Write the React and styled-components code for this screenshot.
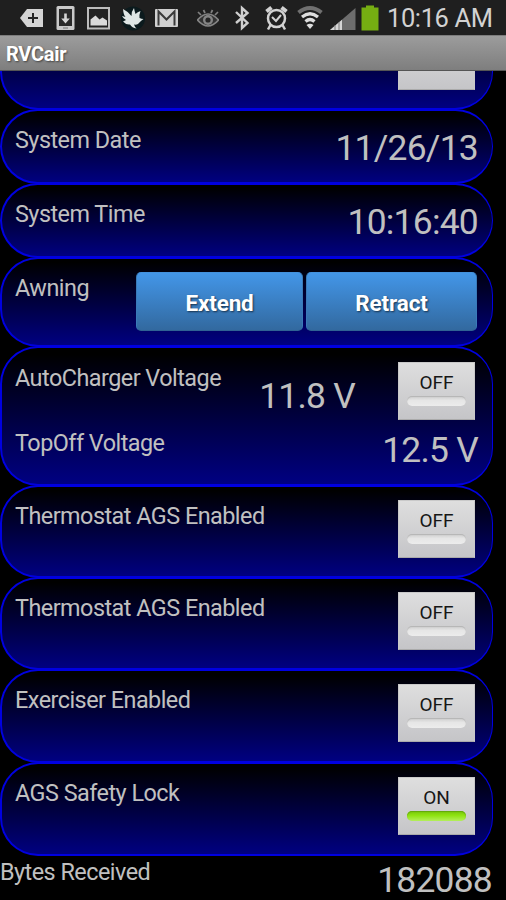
import React from "react";
import styled, { createGlobalStyle } from "styled-components";

const GlobalStyle = createGlobalStyle`
  * {
    box-sizing: border-box;
  }
  body {
    margin: 0;
    background: #000;
    font-family: Roboto, "Noto Sans", sans-serif;
  }
`;

const Screen = styled.div`
  display: flex;
  flex-direction: column;
  width: 506px;
  height: 900px;
  overflow: hidden;
  background: #000;
  color: #c0c0c0;
`;

const StatusBar = styled.header`
  display: flex;
  align-items: center;
  flex: none;
  height: 35px;
  padding-left: 20px;
  background: #1f1f1f;
`;

const StatusIcon = styled.svg`
  flex: none;
  display: block;
  width: ${(p) => p.$w}px;
  height: 35px;
  margin-right: ${(p) => p.$gap}px;
`;

const Clock = styled.span`
  font-size: 25.5px;
  line-height: 35px;
  letter-spacing: -0.4px;
  padding-top: 1px;
  color: #d2d2d2;
  white-space: nowrap;
`;

const TitleBar = styled.div`
  flex: none;
  height: 36px;
  padding-left: 6px;
  background: linear-gradient(#9c9c9c, #7e7e7e);
  border-top: 1px solid #7c7c7c;
  border-bottom: 1px solid #555;
  color: #fff;
  font-size: 20px;
  font-weight: 700;
  line-height: 36px;
  letter-spacing: -0.3px;
  text-shadow: 1px 1px 2px rgba(0, 0, 0, 0.5);
`;

const ScrollArea = styled.main`
  flex: 1;
  min-height: 0;
  overflow: hidden;
`;

const List = styled.div`
  margin-top: -54px;
`;

const Card = styled.section`
  width: 493px;
  height: ${(p) => p.$height}px;
  margin-bottom: -1px;
  padding: 0 13px;
  border: 2px solid #0000e0;
  border-right-width: 1px;
  border-radius: 38px;
  background: linear-gradient(#000 6%, #000084) border-box;
`;

const Row = styled.div`
  display: flex;
  align-items: flex-start;
  justify-content: flex-end;
  height: ${(p) => p.$height || "auto"};
`;

const Label = styled.span`
  flex: 1;
  padding-top: ${(p) => p.$top ?? 15}px;
  font-size: 23.4px;
  line-height: 28px;
  letter-spacing: -0.52px;
  white-space: nowrap;
`;

const Value = styled.span`
  padding-top: ${(p) => p.$top ?? 16}px;
  margin-right: ${(p) => p.$right ?? 1}px;
  font-size: 35.4px;
  line-height: 42px;
  letter-spacing: -0.75px;
  white-space: nowrap;
`;

const ToggleButton = styled.button`
  display: flex;
  flex-direction: column;
  align-items: center;
  flex: none;
  width: 77px;
  height: 58px;
  margin: ${(p) => p.$top ?? 13}px 4px 0 0;
  padding: 9px 0 0;
  border: 1px solid #c9c9c9;
  border-bottom-color: #aaa;
  background: linear-gradient(#dedede, #c5c5c8);
  color: #161616;
  font-family: inherit;
  font-size: 19px;
  line-height: 22px;
`;

const Indicator = styled.span`
  width: 59px;
  height: 10px;
  margin-top: 2px;
  border-radius: 5px;
  background: ${(p) =>
    p.$on
      ? "linear-gradient(#78c60c, #8fe312 45%, #b4ee5c)"
      : "linear-gradient(#cdcdcd, #e6e6e6 45%, #ececec)"};
  box-shadow: inset 0 1px 1px ${(p) => (p.$on ? "#62a80a" : "#b4b4b4")};
`;

const ActionButton = styled.button`
  width: ${(p) => p.$width}px;
  height: 59px;
  margin: 13px 0 0 3px;
  padding: 3px 0 0;
  border: 1px solid #3a7ab8;
  border-top-color: #4391dc;
  border-bottom-color: #2f6294;
  border-radius: 5px;
  background: linear-gradient(#4396e8, #32699f);
  color: #fff;
  font-family: inherit;
  font-size: 22.5px;
  font-weight: 700;
  letter-spacing: -0.15px;
  text-shadow: 1px 1px 2px rgba(0, 0, 0, 0.6);
  &:last-child {
    margin-right: 2px;
  }
`;

const Footer = styled.footer`
  display: flex;
  width: 493px;
`;

const StatusIcons = () => (
  <>
    <StatusIcon $w={23} $gap={13} viewBox="0 0 23 35">
      <path d="M7 9h16v18H7L0 18z" fill="#d4d4d4" />
      <path d="M13 13v10M8 18h10" stroke="#222" strokeWidth="2" />
    </StatusIcon>
    <StatusIcon $w={19} $gap={12} viewBox="0 0 19 35">
      <rect x="0.5" y="6" width="18" height="24" rx="1.500" fill="#c9c9c9" />
      <rect x="3" y="9" width="13" height="17" fill="#292929" />
      <path d="M8.200 13.500h2.600v5h3L9.500 23.500l-4.300-5h3z" fill="#d4d4d4" />
      <path d="M7 28h5" stroke="#777" />
    </StatusIcon>
    <StatusIcon $w={23} $gap={11} viewBox="0 0 23 35">
      <rect x="1" y="8" width="21" height="20.500" fill="#222" stroke="#bcbcbc" strokeWidth="2" />
      <path d="M3.500 25.500v-6l5-4 4 4 3-2 4.500 3v5z" fill="#dadada" />
    </StatusIcon>
    <StatusIcon $w={24} $gap={10} viewBox="0 0 24 35">
      <circle cx="12" cy="18.500" r="12" fill="#0b1a1d" />
      <path
        d="M2 9q5 2.500 8.500 7Q10.500 11 13 8q.5 3 1.500 6 2-2 5-3-1.500 4-1 7 2 1 4 1-3 2-5.500 5-2 1-4 .5.500 2 2.500 4-4.500-.5-6.500-4-4 .5-7-3l3-1.500q-3-1.500-4-4l3.500 1Q2.500 15 2 9z"
        fill="#dfe6e5"
      />
    </StatusIcon>
    <StatusIcon $w={23} $gap={19} viewBox="0 0 23 35">
      <rect x="0" y="9" width="23" height="18" rx="1" fill="#d0d0d0" />
      <path d="M3.500 25.500V11.500l8 8 8-8v14" fill="none" stroke="#3a3a3a" strokeWidth="2" />
    </StatusIcon>
    <StatusIcon $w={22} $gap={16} viewBox="0 0 22 35">
      <path d="M0.500 20q10.500-12 21 0-10.500 12-21 0z" fill="#333" stroke="#858585" strokeWidth="1.700" />
      <circle cx="11" cy="20" r="5" fill="#858585" />
      <circle cx="11" cy="20" r="2.600" fill="#252525" />
      <path d="M1 12l3 3M6.500 10l1.500 3M15.500 10L14 13M21 12l-3 3" stroke="#808080" strokeWidth="1.700" />
    </StatusIcon>
    <StatusIcon $w={15} $gap={15} viewBox="0 0 15 35">
      <path d="M1 12l11.500 11L7 28V8l5.500 5L1 23" fill="none" stroke="#cfcfcf" strokeWidth="2.400" />
    </StatusIcon>
    <StatusIcon $w={23} $gap={9} viewBox="0 0 23 35">
      <circle cx="11.500" cy="18.500" r="8.500" fill="none" stroke="#d2d2d2" strokeWidth="2.500" />
      <path d="M1.500 11.500l5-4M21.500 11.500l-5-4" stroke="#d2d2d2" strokeWidth="4" />
      <path d="M5.500 25L3 29.500M17.500 25l2.500 4.500" stroke="#d2d2d2" strokeWidth="2.500" />
      <path d="M7 17l4 4 5-6" fill="none" stroke="#d2d2d2" strokeWidth="2" />
    </StatusIcon>
    <StatusIcon $w={26} $gap={7} viewBox="0 0 26 35">
      <path d="M1.500 12.500q11.500-9 23 0" fill="none" stroke="#707070" strokeWidth="4" />
      <path d="M5 17q8-6.500 16 0M8.500 21.500q4.500-4 9 0" fill="none" stroke="#dedede" strokeWidth="3.200" />
      <path d="M9.500 25q3.500-2.500 7 0L13 29z" fill="#dedede" />
    </StatusIcon>
    <StatusIcon $w={26} $gap={5} viewBox="0 0 26 35">
      <path d="M0 30L25.500 8v22z" fill="#6d6d6d" />
      <path d="M0 30l12-10.300V30z" fill="#d5d5d5" />
      <path d="M5 25v5M9 22v8" stroke="#777" />
    </StatusIcon>
    <StatusIcon $w={18} $gap={8} viewBox="0 0 18 35">
      <path d="M0.500 7.500H5V5.500h8v2h4.500v23H0.500z" fill="#76ae12" />
    </StatusIcon>
  </>
);

const Toggle = ({ on, top }) => (
  <ToggleButton type="button" aria-pressed={!!on} $top={top}>
    {on ? "ON" : "OFF"}
    <Indicator $on={on} />
  </ToggleButton>
);

const switches = [
  { label: "Thermostat AGS Enabled", on: false, height: 93 },
  { label: "Thermostat AGS Enabled", on: false, height: 93 },
  { label: "Exerciser Enabled", on: false, height: 94 },
  { label: "AGS Safety Lock", on: true, height: 94 },
];

const App = () => {
  return (
    <>
      <GlobalStyle />
      <Screen>
        <StatusBar>
          <StatusIcons />
          <Clock>10:16 AM</Clock>
        </StatusBar>
        <TitleBar>RVCair</TitleBar>
        <ScrollArea>
          <List>
            <Card $height={93}>
              <Row>
                <ToggleButton type="button" $top={13} />
              </Row>
            </Card>
            <Card $height={75}>
              <Row>
                <Label>System Date</Label>
                <Value>11/26/13</Value>
              </Row>
            </Card>
            <Card $height={75}>
              <Row>
                <Label>System Time</Label>
                <Value>10:16:40</Value>
              </Row>
            </Card>
            <Card $height={90}>
              <Row>
                <Label>Awning</Label>
                <ActionButton $width={167}>Extend</ActionButton>
                <ActionButton $width={171}>Retract</ActionButton>
              </Row>
            </Card>
            <Card $height={140}>
              <Row $height="81px">
                <Label $top={16}>AutoCharger Voltage</Label>
                <Value $top={27} $right={43}>
                  11.8 V
                </Value>
                <Toggle top={14} />
              </Row>
              <Row>
                <Label $top={0}>TopOff Voltage</Label>
                <Value $top={0}>12.5 V</Value>
              </Row>
            </Card>
            {switches.map((item, i) => (
              <Card key={i} $height={item.height}>
                <Row>
                  <Label>{item.label}</Label>
                  <Toggle on={item.on} />
                </Row>
              </Card>
            ))}
            <Footer>
              <Label $top={3}>Bytes Received</Label>
              <Value $top={4}>182088</Value>
            </Footer>
          </List>
        </ScrollArea>
      </Screen>
    </>
  );
};

export default App;
